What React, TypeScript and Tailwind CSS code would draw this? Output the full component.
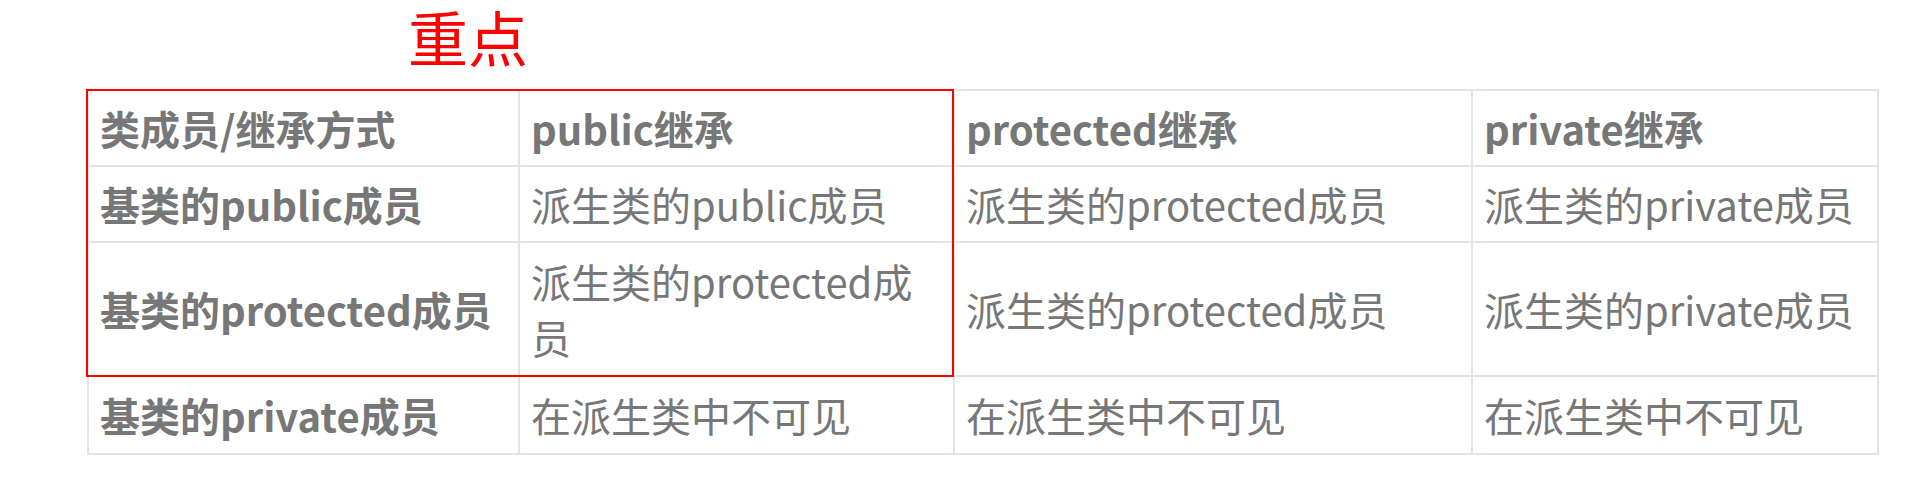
const headers = ["类成员/继承方式", "public继承", "protected继承", "private继承"];

const rows = [
  ["基类的public成员", "派生类的public成员", "派生类的protected成员", "派生类的private成员"],
  ["基类的protected成员", "派生类的protected成员", "派生类的protected成员", "派生类的private成员"],
  ["基类的private成员", "在派生类中不可见", "在派生类中不可见", "在派生类中不可见"],
];

const widths = ["w-[431px]", "w-[435px]", "w-[518px]", "w-[406px]"];

export default function App() {
  return (
    <div
      className="w-[1916px] h-[492px] bg-white text-[#777777]"
      style={{ fontFamily: '"Noto Sans CJK SC", "Noto Sans", sans-serif' }}
    >
      <div className="pl-[408px] pt-[2px] text-[60px] leading-[88px] -mt-[10px] text-[#ff0000]">重点</div>

      <div className="relative ml-[87px] mt-[9px] w-[1790px]">
        <table className="w-[1790px] table-fixed border-collapse border-t-2 border-b-2 border-t-[#cdd0d4] border-b-[#cdd0d4] text-[40px] leading-[56px]">
          <thead>
            <tr>
              {headers.map((h, i) => (
                <th
                  key={h}
                  className={`${widths[i]} border-2 border-[#e1e4e8] px-[11px] py-[9px] text-left font-bold`}
                >
                  {h}
                </th>
              ))}
            </tr>
          </thead>
          <tbody>
            {rows.map((row, r) => (
              <tr key={r}>
                {row.map((cell, c) => (
                  <td
                    key={c}
                    className={`border-2 border-[#e1e4e8] px-[11px] ${r === 0 ? "py-[9px]" : "py-[10px]"} ${c === 0 ? "font-bold" : ""}`}
                  >
                    {cell}
                  </td>
                ))}
              </tr>
            ))}
          </tbody>
        </table>

        {/* red annotation box */}
        <div className="absolute left-[-1px] top-0 w-[868px] h-[288px] border-2 border-[#ff0000]" />
      </div>
    </div>
  );
}
